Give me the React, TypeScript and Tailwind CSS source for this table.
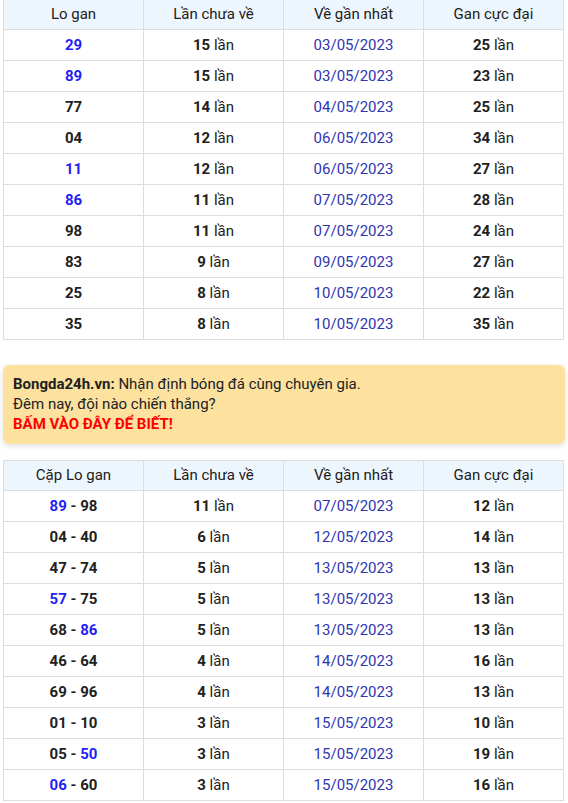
const loGan = [
  { n: "29", blue: true, lan: 15, date: "03/05/2023", max: 25 },
  { n: "89", blue: true, lan: 15, date: "03/05/2023", max: 23 },
  { n: "77", blue: false, lan: 14, date: "04/05/2023", max: 25 },
  { n: "04", blue: false, lan: 12, date: "06/05/2023", max: 34 },
  { n: "11", blue: true, lan: 12, date: "06/05/2023", max: 27 },
  { n: "86", blue: true, lan: 11, date: "07/05/2023", max: 28 },
  { n: "98", blue: false, lan: 11, date: "07/05/2023", max: 24 },
  { n: "83", blue: false, lan: 9, date: "09/05/2023", max: 27 },
  { n: "25", blue: false, lan: 8, date: "10/05/2023", max: 22 },
  { n: "35", blue: false, lan: 8, date: "10/05/2023", max: 35 },
];

// pair: [first, firstBlue, second, secondBlue]
const capLoGan: { a: string; ab: boolean; b: string; bb: boolean; lan: number; date: string; max: number }[] = [
  { a: "89", ab: true, b: "98", bb: false, lan: 11, date: "07/05/2023", max: 12 },
  { a: "04", ab: false, b: "40", bb: false, lan: 6, date: "12/05/2023", max: 14 },
  { a: "47", ab: false, b: "74", bb: false, lan: 5, date: "13/05/2023", max: 13 },
  { a: "57", ab: true, b: "75", bb: false, lan: 5, date: "13/05/2023", max: 13 },
  { a: "68", ab: false, b: "86", bb: true, lan: 5, date: "13/05/2023", max: 13 },
  { a: "46", ab: false, b: "64", bb: false, lan: 4, date: "14/05/2023", max: 16 },
  { a: "69", ab: false, b: "96", bb: false, lan: 4, date: "14/05/2023", max: 13 },
  { a: "01", ab: false, b: "10", bb: false, lan: 3, date: "15/05/2023", max: 10 },
  { a: "05", ab: false, b: "50", bb: true, lan: 3, date: "15/05/2023", max: 19 },
  { a: "06", ab: true, b: "60", bb: false, lan: 3, date: "15/05/2023", max: 16 },
];

const th = "border border-[#dddddd] bg-[#eef6fd] font-normal text-[15px] text-[#212121] h-[30px] w-1/4";
const td = "border border-[#dddddd] text-center h-[31px] text-[15px]";

function Lan({ v }: { v: number }) {
  return (
    <>
      <b className="font-bold">{v}</b> lần
    </>
  );
}

function Header({ first }: { first: string }) {
  return (
    <thead>
      <tr>
        <th className={th}>{first}</th>
        <th className={th}>Lần chưa về</th>
        <th className={th}>Về gần nhất</th>
        <th className={th}>Gan cực đại</th>
      </tr>
    </thead>
  );
}

export default function App() {
  return (
    <div className="bg-white px-[3px] text-[#212121] font-['Roboto',sans-serif] w-[568px] h-[803px] overflow-hidden">
      <table className="w-[561px] border-collapse table-fixed -mt-px">
        <Header first="Lo gan" />
        <tbody>
          {loGan.map((r) => (
            <tr key={r.n}>
              <td className={`${td} font-bold ${r.blue ? "text-[#1f1ff5]" : "text-[#212121]"}`}>{r.n}</td>
              <td className={td}>
                <Lan v={r.lan} />
              </td>
              <td className={`${td} text-[#3035b0]`}>{r.date}</td>
              <td className={td}>
                <Lan v={r.max} />
              </td>
            </tr>
          ))}
        </tbody>
      </table>

      <div className="mt-[25px] mb-[16px] h-[79px] rounded-md bg-[#fde19f] px-[10px] py-[9px] text-[15px] leading-5 shadow-[0_2px_6px_rgba(0,0,0,0.12)]">
        <p>
          <b className="font-bold">Bongda24h.vn:</b> Nhận định bóng đá cùng chuyên gia.
        </p>
        <p>Đêm nay, đội nào chiến thắng?</p>
        <p className="font-bold text-[#ff0000]">BẤM VÀO ĐÂY ĐỂ BIẾT!</p>
      </div>

      <table className="w-[561px] border-collapse table-fixed">
        <Header first="Cặp Lo gan" />
        <tbody>
          {capLoGan.map((r) => (
            <tr key={r.a + r.b}>
              <td className={`${td} font-bold`}>
                <span className={r.ab ? "text-[#1f1ff5]" : ""}>{r.a}</span> -{" "}
                <span className={r.bb ? "text-[#1f1ff5]" : ""}>{r.b}</span>
              </td>
              <td className={td}>
                <Lan v={r.lan} />
              </td>
              <td className={`${td} text-[#3035b0]`}>{r.date}</td>
              <td className={td}>
                <Lan v={r.max} />
              </td>
            </tr>
          ))}
        </tbody>
      </table>
    </div>
  );
}
